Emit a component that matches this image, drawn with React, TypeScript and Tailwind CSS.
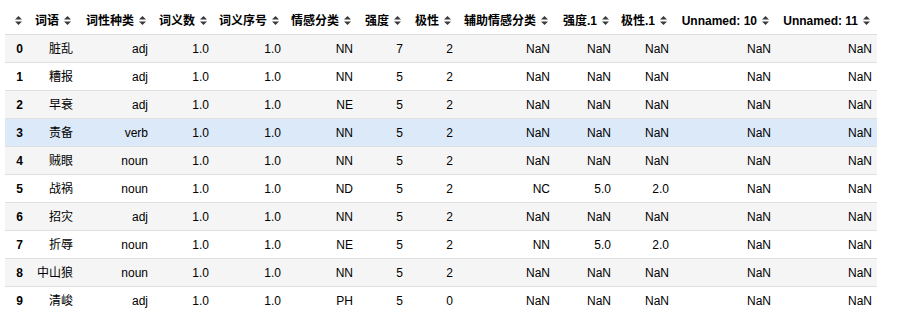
import React from "react";

const headers = ["", "词语", "词性种类", "词义数", "词义序号", "情感分类", "强度", "极性", "辅助情感分类", "强度.1", "极性.1", "Unnamed: 10", "Unnamed: 11"];

const rows: string[][] = [
  ["0", "脏乱", "adj", "1.0", "1.0", "NN", "7", "2", "NaN", "NaN", "NaN", "NaN", "NaN"],
  ["1", "糟报", "adj", "1.0", "1.0", "NN", "5", "2", "NaN", "NaN", "NaN", "NaN", "NaN"],
  ["2", "早衰", "adj", "1.0", "1.0", "NE", "5", "2", "NaN", "NaN", "NaN", "NaN", "NaN"],
  ["3", "责备", "verb", "1.0", "1.0", "NN", "5", "2", "NaN", "NaN", "NaN", "NaN", "NaN"],
  ["4", "贼眼", "noun", "1.0", "1.0", "NN", "5", "2", "NaN", "NaN", "NaN", "NaN", "NaN"],
  ["5", "战祸", "noun", "1.0", "1.0", "ND", "5", "2", "NC", "5.0", "2.0", "NaN", "NaN"],
  ["6", "招灾", "adj", "1.0", "1.0", "NN", "5", "2", "NaN", "NaN", "NaN", "NaN", "NaN"],
  ["7", "折辱", "noun", "1.0", "1.0", "NE", "5", "2", "NN", "5.0", "2.0", "NaN", "NaN"],
  ["8", "中山狼", "noun", "1.0", "1.0", "NN", "5", "2", "NaN", "NaN", "NaN", "NaN", "NaN"],
  ["9", "清峻", "adj", "1.0", "1.0", "PH", "5", "0", "NaN", "NaN", "NaN", "NaN", "NaN"],
];

function SortIcon() {
  return (
    <svg width="7" height="9" viewBox="0 0 7 9" className="shrink-0">
      <polygon points="3.5,0 7,3.6 0,3.6" fill="#3a3a3a" />
      <polygon points="0,5.4 7,5.4 3.5,9" fill="#3a3a3a" />
    </svg>
  );
}

const grid = "grid grid-cols-[24px_49px_75px_61px_72px_72px_50px_50px_97px_61px_58px_102px_101px]";

export default function App() {
  return (
    <div
      className="w-[903px] h-[332px] bg-white pl-[5px] pt-[7px] text-[12px] text-black"
      style={{ fontFamily: '"Liberation Sans", "Noto Sans CJK SC", Arial, sans-serif' }}
    >
      <div className="w-[872px]">
        <div className={`${grid} h-[28px] border-b border-[#dcdcdc] font-bold`}>
          {headers.map((h, i) => (
            <div key={i} className="flex items-center justify-end gap-[5px] pr-[7px]">
              {h && <span className="whitespace-nowrap">{h}</span>}
              <SortIcon />
            </div>
          ))}
        </div>
        {rows.map((r, ri) => {
          const bg = ri === 3 ? "bg-[#dbe9f9]" : ri % 2 === 0 ? "bg-[#f5f5f5]" : "bg-white";
          const border = ri === rows.length - 1 ? "" : "border-b border-[#e0e0e0]";
          return (
            <div key={ri} className={`${grid} h-[28px] ${bg} ${border}`}>
              {r.map((c, ci) => (
                <div
                  key={ci}
                  className={`flex items-center justify-end pr-[5px] whitespace-nowrap ${ci === 0 ? "font-bold pr-[6px]" : ""}`}
                >
                  {c}
                </div>
              ))}
            </div>
          );
        })}
      </div>
    </div>
  );
}
